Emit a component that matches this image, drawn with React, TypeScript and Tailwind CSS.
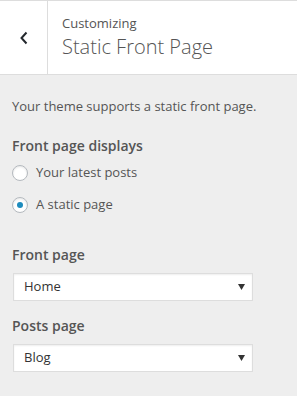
import React from 'react';

const font = { fontFamily: '"Open Sans", "Noto Sans", sans-serif' };

function Radio({ checked, label }: { checked?: boolean; label: string }) {
  return (
    <label className="flex items-center h-5 gap-2 text-[13px] text-[#555]">
      <span className="flex items-center justify-center w-4 h-4 rounded-full border border-[#b4b9be] bg-white shadow-[inset_0_1px_2px_rgba(0,0,0,0.1)]">
        {checked && <span className="w-[6px] h-[6px] rounded-full bg-[#1e8cbe]" />}
      </span>
      <span>{label}</span>
    </label>
  );
}

function Select({ value }: { value: string }) {
  return (
    <div className="mt-2 ml-[1px] w-[240px] h-7 flex items-center justify-between pl-[10px] pr-[7px] bg-white border border-[#ddd] shadow-[inset_0_1px_2px_rgba(0,0,0,0.07)] text-[13px] text-[#333]">
      <span>{value}</span>
      <svg width="7" height="6" viewBox="0 0 7 6">
        <path d="M0 0h7L3.5 6z" fill="#333" />
      </svg>
    </div>
  );
}

export default function App() {
  return (
    <div className="w-[297px] h-[396px] bg-[#eee]" style={font}>
      <div className="flex h-[75px] bg-white border-y border-[#ddd]">
        <div className="flex items-center justify-center w-12 border-r border-[#ddd] text-[#23282d]">
          <svg width="10" height="14" viewBox="0 0 10 14">
            <path d="M7.5 1.5L2.5 7l5 5.5" fill="none" stroke="#23282d" strokeWidth="2" />
          </svg>
        </div>
        <div className="flex flex-col pl-[14px] pt-[13px] text-[#555]">
          <span className="text-[13px] leading-[18px]">Customizing</span>
          <span className="text-[20px] leading-[26px] font-light mt-[2px]">Static Front Page</span>
        </div>
      </div>

      <div className="px-3 text-[#555]">
        <p className="pt-[22px] text-[13px] leading-[18px]">Your theme supports a static front page.</p>
        <div className="mt-[21px] text-[14px] leading-5 font-semibold">Front page displays</div>
        <div className="mt-[7px] flex flex-col gap-3">
          <Radio label="Your latest posts" />
          <Radio checked label="A static page" />
        </div>
        <div className="mt-[30px] text-[14px] leading-5 font-semibold">Front page</div>
        <Select value="Home" />
        <div className="mt-[15px] text-[14px] leading-5 font-semibold">Posts page</div>
        <Select value="Blog" />
      </div>
    </div>
  );
}
